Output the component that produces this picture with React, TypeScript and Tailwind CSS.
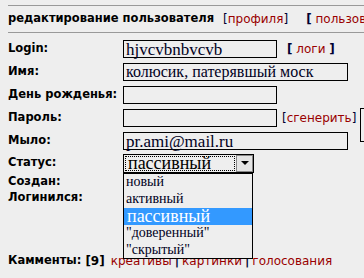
const OPTIONS = ["новый", "активный", "пассивный", "\"доверенный\"", "\"скрытый\""];

function Field({ width, value, latin }: { width: string; value?: string; latin?: boolean }) {
	return (
		<div
			className={`${width} shrink-0 h-[18px] border border-black flex items-center pl-[2px] font-['Liberation_Serif',serif] ${latin ? "text-[17px]" : "text-[16px]"} leading-none text-[#000022] whitespace-nowrap`}
		>
			{value}
		</div>
	);
}

export default function App() {
	return (
		<div className="relative w-[364px] h-[278px] overflow-hidden bg-[#eeeeee] pl-2 pt-[5px] font-['DejaVu_Sans',Verdana,sans-serif] text-[11.5px] text-black">
			{/* Header */}
			<div className="h-[28px] border-t border-b border-[#999999] flex items-center whitespace-nowrap">
				<span className="font-bold">редактирование пользователя</span>
				<span className="ml-[9px] text-[12px] text-[#000033]">
					[<span className="text-[#990000]">профиля</span>]
				</span>
				<span className="ml-[18px] text-[12px] text-[#000033]">
					<span className="font-bold">[</span> <span className="text-[#990000]">пользователи</span>
				</span>
			</div>

			{/* Form */}
			<div className="mt-[7px] flex flex-col gap-[5px]">
				<div className="flex items-center h-[18px]">
					<span className="w-[115px] shrink-0 font-bold">Login:</span>
					<Field width="w-[154px]" value="hjvcvbnbvcvb" latin />
					<span className="ml-[10px] text-[12px] text-[#000033] whitespace-nowrap">
						<span className="font-bold">[</span> <span className="text-[#990000]">логи</span>{" "}
						<span className="font-bold">]</span>
					</span>
				</div>
				<div className="flex items-center h-[18px]">
					<span className="w-[115px] shrink-0 font-bold">Имя:</span>
					<Field width="w-[225px]" value="колюсик, патерявшый моск" />
				</div>
				<div className="flex items-center h-[18px]">
					<span className="w-[115px] shrink-0 font-bold whitespace-nowrap">День рожденья:</span>
					<Field width="w-[154px]" />
				</div>
				<div className="flex items-start h-[18px]">
					<span className="w-[115px] shrink-0 font-bold self-center">Пароль:</span>
					<Field width="w-[154px]" />
					<span className="ml-[5px] shrink-0 self-center text-[12px] text-[#000033] whitespace-nowrap">
						[<span className="text-[#990000]">сгенерить</span>]
					</span>
					<div className="ml-[4px] -mt-[1px] w-[40px] h-[34px] shrink-0 border border-black" />
				</div>
				<div className="flex items-center h-[18px]">
					<span className="w-[115px] shrink-0 font-bold">Мыло:</span>
					<Field width="w-[225px]" value="pr.ami@mail.ru" latin />
				</div>
			</div>

			{/* Status select */}
			<div className="mt-[4px] flex items-center h-[18px]">
				<span className="w-[115px] shrink-0 font-bold">Статус:</span>
				<div className="relative w-[131px] h-[19px] border border-black flex">
					<div className="flex-1 m-[1px] border border-dotted border-black flex items-center pl-[2px] font-['Liberation_Serif',serif] text-[18px] leading-none whitespace-nowrap">
						пассивный
					</div>
					<div className="w-[17px] border border-[#888888] bg-[#e4e4e4] flex items-center justify-center">
						<div className="w-0 h-0 border-l-[4px] border-r-[4px] border-t-[4px] border-l-transparent border-r-transparent border-t-black" />
					</div>
				</div>
			</div>

			<div className="mt-[2px] flex flex-col">
				<div className="h-[16px] flex items-center font-bold">Создан:</div>
				<div className="h-[16px] flex items-center font-bold">Логинился:</div>
			</div>

			{/* Dropdown list */}
			<div className="absolute left-[123px] top-[173px] z-10 w-[130px] h-[86px] border border-black bg-[#eeeeee] flex flex-col font-['Liberation_Serif',serif] text-[14px] text-[#000022]">
				{OPTIONS.map((o) =>
					o === "пассивный" ? (
						<div key={o} className="h-[17px] flex items-center pl-[3px] bg-[#3399ff] text-white text-[18px] leading-none">
							{o}
						</div>
					) : (
						<div key={o} className="h-[17px] flex items-center pl-[2px] leading-none">
							{o}
						</div>
					),
				)}
			</div>

			{/* Comments */}
			<div className="mt-[46px] flex items-center whitespace-nowrap">
				<span className="font-bold">Камменты:</span>
				<span className="ml-[4px] font-bold text-[12px]">[9]</span>
				<span className="ml-[6px] text-[12px] text-[#990000]">креативы</span>
				<span className="mx-[3px] text-[12px] font-bold text-[#000033]">|</span>
				<span className="text-[12px] text-[#990000]">картинки</span>
				<span className="mx-[3px] text-[12px] font-bold text-[#000033]">|</span>
				<span className="text-[12px] text-[#990000]">голосования</span>
			</div>
		</div>
	);
}
